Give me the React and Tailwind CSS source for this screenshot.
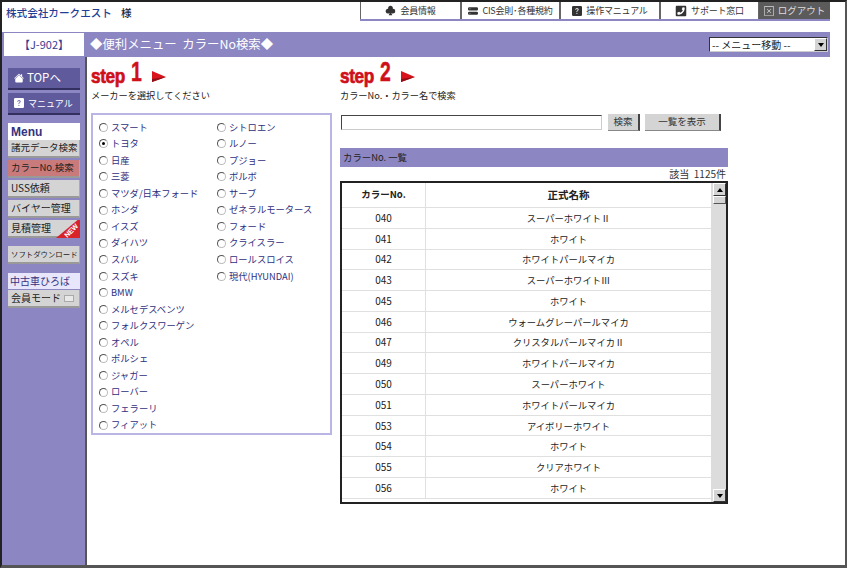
import React from 'react';
import { BsSuitClubFill, BsQuestionSquareFill, BsXSquare, BsHouseFill, BsHddStackFill } from 'react-icons/bs';
import { FaPhoneSquare } from 'react-icons/fa';

const font = "font-['Noto_Sans_CJK_JP','Liberation_Sans',sans-serif]";

const tabs = [
    { icon: <BsSuitClubFill size={11} />, label: '会員情報', w: 'w-[101px]' },
    { icon: <BsHddStackFill size={10} />, label: 'CIS会則･各種規約', w: 'w-[99px]' },
    { icon: <BsQuestionSquareFill size={10} />, label: '操作マニュアル', w: 'w-[100px]' },
    { icon: <FaPhoneSquare size={12} />, label: 'サポート窓口', w: 'w-[99px]' },
];

const makersLeft = ['スマート', 'トヨタ', '日産', '三菱', 'マツダ/日本フォード', 'ホンダ', 'イスズ', 'ダイハツ', 'スバル', 'スズキ', 'BMW', 'メルセデスベンツ', 'フォルクスワーゲン', 'オペル', 'ポルシェ', 'ジャガー', 'ローバー', 'フェラーリ', 'フィアット'];
const makersRight = ['シトロエン', 'ルノー', 'プジョー', 'ボルボ', 'サーブ', 'ゼネラルモータース', 'フォード', 'クライスラー', 'ロールスロイス', '現代(HYUNDAI)'];

const colors = [
    ['040', 'スーパーホワイトⅡ'],
    ['041', 'ホワイト'],
    ['042', 'ホワイトパールマイカ'],
    ['043', 'スーパーホワイトⅢ'],
    ['045', 'ホワイト'],
    ['046', 'ウォームグレーパールマイカ'],
    ['047', 'クリスタルパールマイカⅡ'],
    ['049', 'ホワイトパールマイカ'],
    ['050', 'スーパーホワイト'],
    ['051', 'ホワイトパールマイカ'],
    ['053', 'アイボリーホワイト'],
    ['054', 'ホワイト'],
    ['055', 'クリアホワイト'],
    ['056', 'ホワイト'],
];

const Radio = ({ label, checked }) => (
    <div className="flex h-[16.55px] items-center gap-[3px] text-[9.3px] leading-none text-[#2f2f80] whitespace-nowrap">
        <span className="flex h-[9px] w-[9px] shrink-0 items-center justify-center rounded-full border border-t-[#555] border-l-[#555] border-r-[#bbb] border-b-[#bbb] bg-white">
            {checked && <span className="h-[3px] w-[3px] rounded-full bg-black"></span>}
        </span>
        <span>{label}</span>
    </div>
);

const Step = ({ n }) => (
    <div className="flex h-[23px] items-end">
        <span className="mb-[1px] w-[40px] font-['Liberation_Sans',sans-serif] text-[21px] font-bold leading-[22px] tracking-[-0.5px] text-[#cf101a] [-webkit-text-stroke:0.7px_#cf101a] origin-left scale-x-[0.82]">step</span>
        <span className="mb-[4px] w-[20px] font-['Liberation_Sans',sans-serif] text-[27px] font-bold leading-[24px] text-[#cf101a] [-webkit-text-stroke:0.5px_#cf101a] origin-left scale-x-[0.72]">{n}</span>
        <svg width="16" height="12" viewBox="0 0 16 12" className="mb-[5px]">
            <polygon points="1,0 15,6 1,11" fill="#d9141c" />
            <polygon points="1,8 15,6 1,11" fill="#8f1016" />
        </svg>
    </div>
);

const SideBtn = ({ children, bg = 'bg-[#d4d4d4]', size = 'text-[10px]', className = '' }) => (
    <div className={`flex h-[18px] items-center whitespace-nowrap border-r border-b-2 border-r-[#aaa] border-b-[#999] pl-[3px] leading-none text-[#222] ${bg} ${size} ${className}`}>
        {children}
    </div>
);

const ScrollArrow = ({ up }) => (
    <div className="flex h-[13px] w-[13px] items-center justify-center border border-t-white border-l-white border-r-[#333] border-b-[#333] bg-[#d4d4d4]">
        <span className={`h-0 w-0 border-x-[3px] border-x-transparent ${up ? 'border-b-[4px] border-b-black' : 'border-t-[4px] border-t-black'}`}></span>
    </div>
);

export default function App() {
    return (
        <div className={`${font} flex h-[568px] w-[847px] flex-col overflow-hidden border-t-2 border-r-2 border-b-[3px] border-l-2 border-t-[#222] border-r-[#555] border-b-[#555] border-l-[#222] bg-white`}>
            {/* Header */}
            <div className="flex h-[30px] shrink-0 items-start justify-between pr-[15px]">
                <div className="pt-[3px] pl-[4px] text-[10.6px] font-medium leading-[16px] text-[#1f3f95]">
                    株式会社カークエスト<span className="ml-[9px] text-[#223]">様</span>
                </div>
                <div className="flex h-[19px] border-b-2 border-b-[#8c86c2]">
                    {tabs.map((tab) => (
                        <div key={tab.label} className={`${tab.w} flex items-center justify-center gap-[4px] border-r border-l border-r-[#666] border-l-[#666] bg-white text-[9px] leading-none text-[#333]`}>
                            {tab.icon}
                            <span className="whitespace-nowrap tracking-[-0.2px]">{tab.label}</span>
                        </div>
                    ))}
                    <div className="flex w-[71px] items-center justify-center gap-[4px] bg-[#5b5b5b] text-[9.5px] leading-none text-[#ddd]">
                        <BsXSquare size={10} />
                        <span className="whitespace-nowrap">ログアウト</span>
                    </div>
                </div>
            </div>

            {/* Title bar */}
            <div className="mr-[15px] flex h-[25px] shrink-0 items-center bg-[#8c86c2]">
                <div className="ml-[2px] flex h-[23px] w-[80px] items-center justify-center bg-white text-[11px] leading-none text-[#3a3a90]">【J-902】</div>
                <div className="ml-[6px] flex-1 pb-[1px] text-[12.4px] leading-none text-white">◆便利メニュー&nbsp;&nbsp;カラーNo検索◆</div>
                <div className="mr-[2px] flex h-[15px] w-[119px] items-center justify-between border border-t-[#333] border-l-[#333] border-r-[#ccc] border-b-[#ccc] bg-white pl-[2px] text-[10px] leading-none text-[#222]">
                    <span>-- メニュー移動 --</span>
                    <span className="flex h-[13px] w-[13px] items-center justify-center border border-t-white border-l-white border-r-[#333] border-b-[#333] bg-[#d4d4d4]">
                        <span className="h-0 w-0 border-x-[3px] border-t-[4px] border-x-transparent border-t-black"></span>
                    </span>
                </div>
            </div>

            <div className="flex min-h-0 flex-1">
                {/* Sidebar */}
                <aside className="flex w-[85px] shrink-0 flex-col border-r-2 border-r-[#555] bg-[#8c86c2] pt-[11px] pl-[6px] pr-[5px]">
                    <div className="flex h-[22px] items-center gap-[3px] border-b-2 border-b-[#33305f] bg-[#5f5a9c] pl-[6px] text-[11.5px] leading-none text-white">
                        <BsHouseFill size={10} />
                        <span>TOPへ</span>
                    </div>
                    <div className="mt-[3px] flex h-[22px] items-center gap-[4px] border-b-2 border-b-[#33305f] bg-[#5f5a9c] pl-[6px] text-[9px] leading-none text-white">
                        <BsQuestionSquareFill size={10} />
                        <span>マニュアル</span>
                    </div>
                    <div className="mt-[8px] flex h-[17px] items-center bg-white pl-[3px] font-['Liberation_Sans',sans-serif] text-[12px] font-bold leading-none text-[#33337f]">Menu</div>
                    <div className="flex flex-col gap-[2px]">
                        <SideBtn size="text-[9.5px]">諸元データ検索</SideBtn>
                        <SideBtn size="text-[9.5px]" bg="bg-[#c97b7b]">カラーNo.検索</SideBtn>
                        <SideBtn>USS依頼</SideBtn>
                        <SideBtn>バイヤー管理</SideBtn>
                        <div className="relative overflow-hidden">
                            <SideBtn>見積管理</SideBtn>
                            <div className="absolute right-0 bottom-0 h-0 w-0 border-b-[20px] border-l-[24px] border-b-[#d8232a] border-l-transparent"></div>
                            <span className="absolute right-[1px] bottom-[4px] -rotate-45 font-['Liberation_Sans',sans-serif] text-[7px] font-bold leading-none text-white">NEW</span>
                        </div>
                    </div>
                    <SideBtn size="text-[7.4px]" className="mt-[8px]">ソフトダウンロード</SideBtn>
                    <div className="mt-[9px] flex h-[16px] items-center bg-[#e8e6fa] pl-[2px] text-[10px] leading-none text-[#33337f]">中古車ひろば</div>
                    <SideBtn className="mt-px gap-[3px]">
                        <span>会員モード</span>
                        <span className="h-[7px] w-[10px] border border-[#aaa] bg-[#e8e8e8]"></span>
                    </SideBtn>
                </aside>

                {/* Content */}
                <main className="flex min-w-0 flex-1 gap-[8px] pt-[8px] pl-[4px]">
                    {/* Step 1 */}
                    <section className="w-[241px] shrink-0">
                        <Step n="1" />
                        <p className="mt-[1px] text-[9.2px] leading-[13px] text-[#222]">メーカーを選択してください</p>
                        <div className="mt-[11px] grid h-[322px] grid-cols-[118px_1fr] border-2 border-[#b9b6e6] pt-[4px] pl-[6px]">
                            <div>
                                {makersLeft.map((m) => <Radio key={m} label={m} checked={m === 'トヨタ'} />)}
                            </div>
                            <div>
                                {makersRight.map((m) => <Radio key={m} label={m} />)}
                            </div>
                        </div>
                    </section>

                    {/* Step 2 */}
                    <section className="w-[388px] shrink-0">
                        <Step n="2" />
                        <p className="mt-[1px] text-[9.2px] leading-[13px] text-[#222]">カラーNo.・カラー名で検索</p>
                        <div className="mt-[12px] flex h-[17px] items-center">
                            <div className="ml-px h-[15px] w-[261px] border border-t-[#444] border-l-[#444] border-r-[#ccc] border-b-[#ccc] bg-white"></div>
                            <div className="ml-[6px] flex h-[17px] w-[32px] items-center justify-center border-r-2 border-b border-r-[#444] border-b-[#888] bg-[#d4d4d4] text-[9.5px] leading-none text-[#333]">検索</div>
                            <div className="ml-[5px] flex h-[17px] w-[76px] items-center justify-center border-r-2 border-b border-r-[#444] border-b-[#888] bg-[#d4d4d4] text-[9.5px] leading-none text-[#333]">一覧を表示</div>
                        </div>
                        <div className="mt-[17px] flex h-[19px] items-center bg-[#8c86c2] pl-[3px] text-[9.4px] leading-none text-[#222]">カラーNo. 一覧</div>
                        <div className="flex h-[14px] items-center justify-end pr-[2px] text-[10px] leading-none text-[#333]">該当&nbsp;&nbsp;1125件</div>
                        <div className="flex h-[323px] border-2 border-[#222] bg-white">
                            <div className="min-w-0 flex-1 overflow-hidden">
                                <div className="flex h-[25px] items-center border-b border-b-[#e0e0e0] text-[10.5px] font-bold leading-none text-[#222]">
                                    <div className="w-[83px] text-center text-[9.5px]">カラーNo.</div>
                                    <div className="flex-1 border-l border-l-[#e0e0e0] text-center leading-[24px]">正式名称</div>
                                </div>
                                {colors.map(([no, name]) => (
                                    <div key={no} className="flex h-[20.77px] items-center border-b border-b-[#e0e0e0] text-[9.3px] leading-none text-[#222]">
                                        <div className="w-[83px] text-center text-[10px]">{no}</div>
                                        <div className="flex-1 border-l border-l-[#e0e0e0] text-center leading-[20px]">{name}</div>
                                    </div>
                                ))}
                            </div>
                            <div className="flex w-[15px] shrink-0 flex-col items-end justify-between bg-[#dcdcdc]">
                                <div>
                                    <ScrollArrow up />
                                    <div className="h-[8px] w-[13px] border border-t-white border-l-white border-r-[#555] border-b-[#555] bg-[#d4d4d4]"></div>
                                </div>
                                <ScrollArrow />
                            </div>
                        </div>
                    </section>
                </main>
            </div>
        </div>
    );
}
